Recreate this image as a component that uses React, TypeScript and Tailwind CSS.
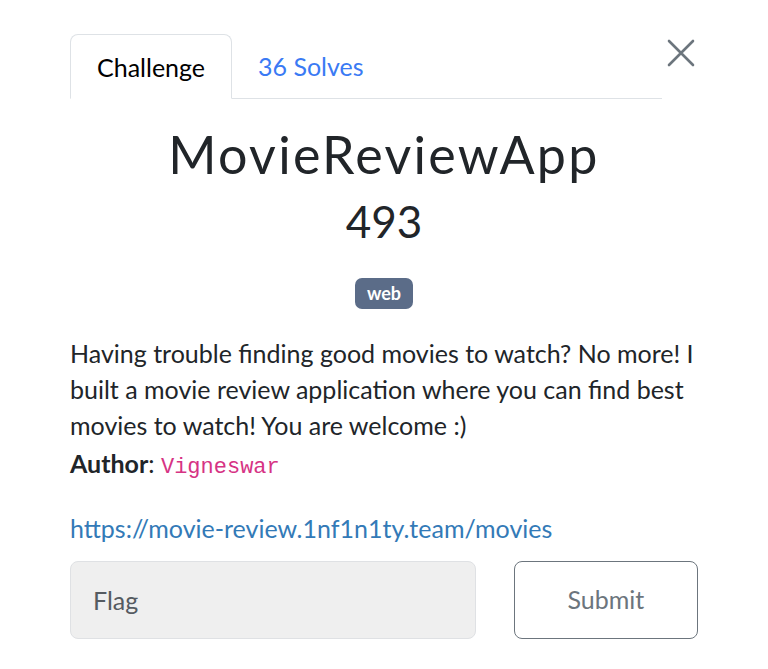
export default function App() {
  return (
    <div className="min-h-[669px] w-[768px] bg-white font-['Lato','Noto_Sans',sans-serif] text-[#212529]">
      <div className="relative px-[70px] pt-[34px]">
        <button className="absolute right-[72px] top-[38px] text-[#6c757d]" aria-label="Close">
          <svg width="30" height="30" viewBox="0 0 30 30" fill="none" stroke="currentColor" strokeWidth="2.6" strokeLinecap="round">
            <path d="M3 3L27 27M27 3L3 27" />
          </svg>
        </button>
        <ul className="mr-[36px] flex border-b border-[#dee2e6]">
          <li className="-mb-px rounded-t-[8px] border border-[#dee2e6] border-b-white bg-white px-[26px] pb-[14px] pt-[15px] text-[25px] leading-[34px] text-black">
            Challenge
          </li>
          <li className="px-[26px] pb-[14px] pt-[15px] text-[25px] leading-[34px] text-[#3a7af4]">
            36 Solves
          </li>
        </ul>

        <h2 className="mt-[22px] text-center text-[52px] font-normal leading-[66px] tracking-[2.3px] text-[#212529]">
          MovieReviewApp
        </h2>
        <h3 className="mt-[6px] text-center text-[44px] leading-[56px]">493</h3>

        <div className="mt-[29px] flex justify-center">
          <span className="rounded-[7px] bg-[#5b6c88] px-[12px] py-[4px] text-[18px] font-bold leading-[23px] text-white">
            web
          </span>
        </div>

        <div className="mt-[26px] text-[25px] leading-[36px]">
          <p>
            Having trouble finding good movies to watch? No more! I built a movie review application where you can find best movies to watch! You are welcome :)
          </p>
          <p className="mt-[2px]">
            <strong className="font-bold">Author</strong>:{" "}
            <code className="font-['Liberation_Mono',monospace] text-[22px] text-[#d63384]">Vigneswar</code>
          </p>
        </div>

        <div className="mt-[24px] text-[25px] leading-[36px]">
          <a className="text-[#337ab7]" href="#">
            https://movie-review.1nf1n1ty.team/movies
          </a>
        </div>

        <div className="mt-[15px] flex gap-[38px]">
          <input
            className="h-[78px] w-[407px] rounded-[8px] border border-[#dfe1e4] bg-[#efefef] px-[22px] text-[25px] text-[#495057] placeholder:text-[#555b61]"
            placeholder="Flag"
          />
          <button className="h-[78px] w-[185px] rounded-[8px] border border-[#6c757d] bg-white text-[25px] text-[#6c757d]">
            Submit
          </button>
        </div>
      </div>
    </div>
  );
}
